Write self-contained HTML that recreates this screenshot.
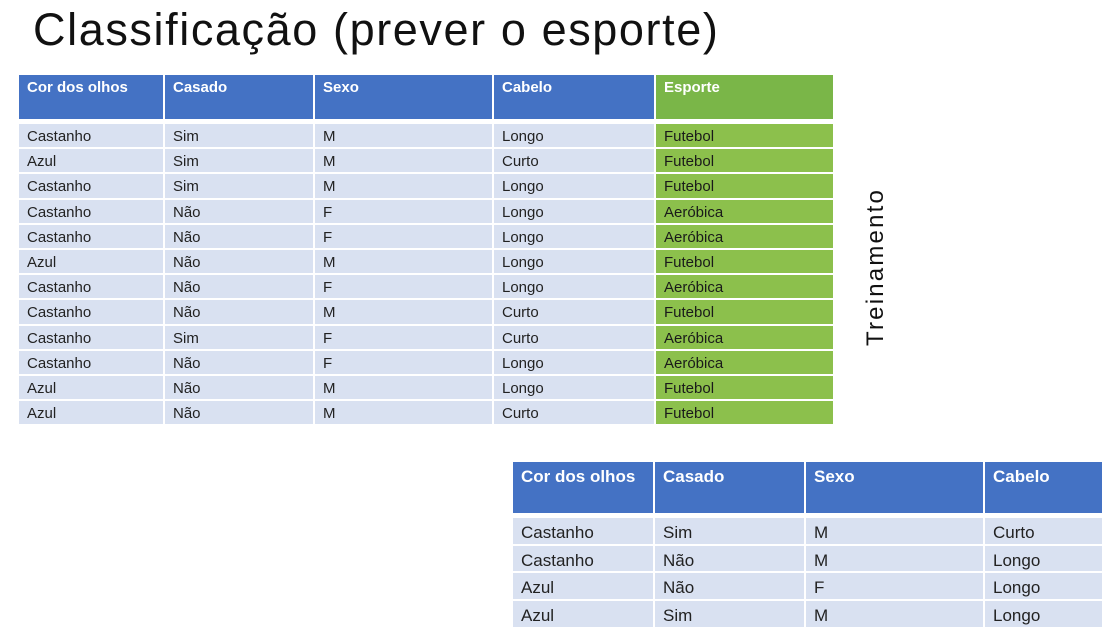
<!DOCTYPE html>
<html><head><meta charset="utf-8"><style>
body{margin:0;width:1102px;height:623px;background:#fff;overflow:hidden;position:relative;font-family:"Liberation Sans",sans-serif}
.t{position:absolute;font-size:45px;left:33px;top:4px;color:#111;letter-spacing:1.6px;white-space:nowrap}
.g{position:absolute;display:grid;column-gap:2px;row-gap:2px}
.g div{background:#d9e1f1;color:#222;padding-left:8px;white-space:nowrap;overflow:hidden}
.g .h{background:#4472c4;color:#fff;font-weight:bold}
.g .gh{background:#7ab648;color:#fff;font-weight:bold}
.g .gr{background:#8cc04c;color:#1a1a1a}
#a{left:19px;top:75px;grid-template-columns:144px 148px 177px 160px 177px;grid-template-rows:47px repeat(12,23.2px);font-size:15px}
#a div{line-height:25px}
#a .h,#a .gh{padding-top:3px;line-height:20px;margin-bottom:3px}
#b{left:513px;top:462px;grid-template-columns:140px 149px 177px 140px;grid-template-rows:54px repeat(4,25.7px);font-size:17px}
#b div{line-height:29px}
#b .h{padding-top:1px;line-height:28px;margin-bottom:3px}
.v{position:absolute;left:862px;top:346px;transform:rotate(-90deg);transform-origin:0 0;font-size:24px;letter-spacing:2.2px;color:#111;white-space:nowrap}
</style></head><body>
<div class="t">Classificação (prever o esporte)</div>
<div class="g" id="a">
<div class="h">Cor dos olhos</div><div class="h">Casado</div><div class="h">Sexo</div><div class="h">Cabelo</div><div class="gh">Esporte</div>
<div>Castanho</div><div>Sim</div><div>M</div><div>Longo</div><div class="gr">Futebol</div>
<div>Azul</div><div>Sim</div><div>M</div><div>Curto</div><div class="gr">Futebol</div>
<div>Castanho</div><div>Sim</div><div>M</div><div>Longo</div><div class="gr">Futebol</div>
<div>Castanho</div><div>Não</div><div>F</div><div>Longo</div><div class="gr">Aeróbica</div>
<div>Castanho</div><div>Não</div><div>F</div><div>Longo</div><div class="gr">Aeróbica</div>
<div>Azul</div><div>Não</div><div>M</div><div>Longo</div><div class="gr">Futebol</div>
<div>Castanho</div><div>Não</div><div>F</div><div>Longo</div><div class="gr">Aeróbica</div>
<div>Castanho</div><div>Não</div><div>M</div><div>Curto</div><div class="gr">Futebol</div>
<div>Castanho</div><div>Sim</div><div>F</div><div>Curto</div><div class="gr">Aeróbica</div>
<div>Castanho</div><div>Não</div><div>F</div><div>Longo</div><div class="gr">Aeróbica</div>
<div>Azul</div><div>Não</div><div>M</div><div>Longo</div><div class="gr">Futebol</div>
<div>Azul</div><div>Não</div><div>M</div><div>Curto</div><div class="gr">Futebol</div>
</div>
<div class="v">Treinamento</div>
<div class="g" id="b">
<div class="h">Cor dos olhos</div><div class="h">Casado</div><div class="h">Sexo</div><div class="h">Cabelo</div>
<div>Castanho</div><div>Sim</div><div>M</div><div>Curto</div>
<div>Castanho</div><div>Não</div><div>M</div><div>Longo</div>
<div>Azul</div><div>Não</div><div>F</div><div>Longo</div>
<div>Azul</div><div>Sim</div><div>M</div><div>Longo</div>
</div>
</body></html>
